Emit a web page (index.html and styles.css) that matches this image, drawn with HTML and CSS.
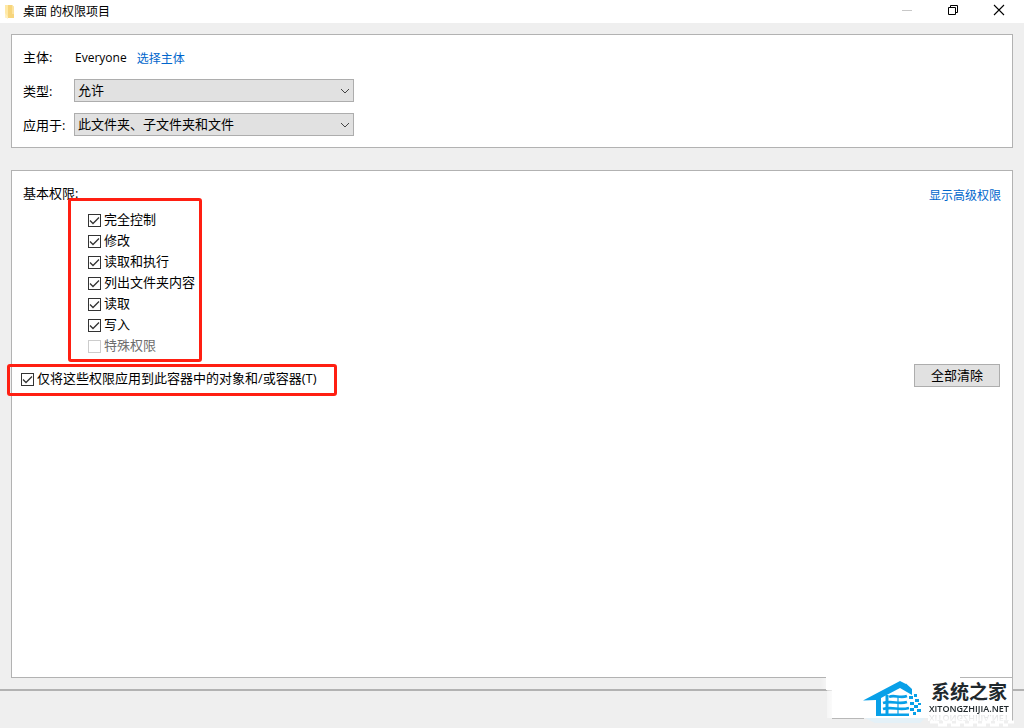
FILE: index.html
```html
<!DOCTYPE html>
<html lang="zh-CN">
<head>
<meta charset="utf-8">
<title>桌面 的权限项目</title>
<link rel="stylesheet" href="styles.css">
</head>
<body>
<header class="titlebar">
  <svg class="folder" width="10" height="16" viewBox="0 0 10 16" aria-hidden="true"><path d="M0 1h7l2 2v11H2L0 13z" fill="#f7d57c"/><path d="M0 1h3v13L0 13z" fill="#ffe9a6"/><path d="M3 13v2l-3-2V9z" fill="#fff0c0"/><path d="M7 1l2 2v7H7z" fill="#fbe3a0"/></svg>
  <h1 class="title">桌面 的权限项目</h1>
  <div class="window-buttons">
    <button class="window-button" type="button" aria-label="最小化" disabled><svg width="12" height="12" viewBox="0 0 12 12"><path d="M1 6.5h10" stroke="#c8c8c8"/></svg></button>
    <button class="window-button" type="button" aria-label="还原"><svg width="12" height="12" viewBox="0 0 12 12"><path d="M1.5 3.5h7v7h-7zM3.5 3.5v-2h7v7h-2" fill="none" stroke="#000"/></svg></button>
    <button class="window-button" type="button" aria-label="关闭"><svg width="12" height="12" viewBox="0 0 12 12"><path d="M1 1l10 10M11 1L1 11" stroke="#000" stroke-width="1.1"/></svg></button>
  </div>
</header>
<main class="content">
  <section class="panel subject">
    <div class="row">
      <span class="label">主体:</span>
      <span class="principal">Everyone</span>
      <a class="link" href="#principal">选择主体</a>
    </div>
    <div class="row">
      <label class="label" for="type">类型:</label>
      <div class="combo">
        <select class="select" id="type"><option>允许</option></select>
        <svg class="chevron" width="10" height="6" viewBox="0 0 10 6"><path d="M1 1l4 4 4-4" fill="none" stroke="#444"/></svg>
      </div>
    </div>
    <div class="row">
      <label class="label" for="scope">应用于:</label>
      <div class="combo">
        <select class="select" id="scope"><option>此文件夹、子文件夹和文件</option></select>
        <svg class="chevron" width="10" height="6" viewBox="0 0 10 6"><path d="M1 1l4 4 4-4" fill="none" stroke="#444"/></svg>
      </div>
    </div>
  </section>
  <section class="panel permissions">
    <div class="heading">
      <h2 class="heading-text">基本权限:</h2>
      <a class="link" href="#advanced">显示高级权限</a>
    </div>
    <ul class="list">
      <li><label class="check"><input class="box" type="checkbox" checked>完全控制</label></li>
      <li><label class="check"><input class="box" type="checkbox" checked>修改</label></li>
      <li><label class="check"><input class="box" type="checkbox" checked>读取和执行</label></li>
      <li><label class="check"><input class="box" type="checkbox" checked>列出文件夹内容</label></li>
      <li><label class="check"><input class="box" type="checkbox" checked>读取</label></li>
      <li><label class="check"><input class="box" type="checkbox" checked>写入</label></li>
      <li><label class="check check-disabled"><input class="box" type="checkbox" disabled>特殊权限</label></li>
    </ul>
    <div class="actions">
      <label class="check check-inherit"><input class="box" type="checkbox" checked>仅将这些权限应用到此容器中的对象和/或容器(T)</label>
      <button class="clear" type="button">全部清除</button>
    </div>
  </section>
</main>
<footer class="footer"></footer>
<div class="watermark">
  <svg class="haze" width="204" height="52" viewBox="0 0 204 52" aria-hidden="true">
    <defs><linearGradient id="fade"><stop offset="0" stop-color="#fff" stop-opacity="0"/><stop offset="1" stop-color="#fff"/></linearGradient></defs>
    <path d="M6 1H140V2H192V45H108V42H12V14H6z" fill="#fff"/>
    <path d="M0 2h10v11H0zM7 14h10v28H7z" fill="url(#fade)"/>
    <path d="M12 42.500h32" stroke="#b8b8b8"/>
    <path d="M140 1.500h52.500V45" fill="none" stroke="#b5b5b5"/>
    <path d="M45 42h60l-5 5H55z" fill="#e4f1f8"/>
    <path d="M110 46h84M118 49h70" stroke="#fff" stroke-width="3" stroke-dasharray="9 4"/>
  </svg>
  <svg class="logo" width="60" height="38" viewBox="0 0 60 38" aria-hidden="true">
    <path fill="#08a0e8" d="M0 20.500L37 1 43 4V3.500L49 9v6L37 8 18 18v18h-5V20z"/>
    <path fill="#08a0e8" d="M13 18h5v18h-5z"/>
    <path fill="none" stroke="#08a0e8" stroke-width="2.600" d="M26 17c5-3 11 2 18-1M20 23c10-3 15 2 24-1M20 29c10-3 15 2 26-1M13 34.700h33"/>
    <path fill="none" stroke="#08a0e8" stroke-width="3" d="M24 15v20"/>
    <path fill="none" stroke="#08a0e8" stroke-width="1.200" d="M35 16v19"/>
    <path fill="#08a0e8" d="M46 16h4v3h-4zM51 14h3v3h-3zM52 19h4v3h-4zM47 22h4v3h-4zM55 23h3v2h-3zM51 25h4v3h-4zM47 28h4v3h-4zM54 29h4v3h-4zM50 32h3v3h-3z"/>
  </svg>
  <div class="brand">
    <span class="brand-name">系统之家</span>
    <span class="brand-url">XITONGZHIJIA.NET</span>
  </div>
</div>
</body>
</html>
```
FILE: styles.css
```css
* { box-sizing: border-box; }
body {
  margin: 0;
  min-height: 100vh;
  display: flex;
  flex-direction: column;
  position: relative;
  overflow: hidden;
  background: #efefef;
  color: #000;
  font: 13px/20px "Open Sans", "Noto Sans CJK SC", sans-serif;
}
.titlebar {
  display: flex;
  align-items: center;
  height: 23px;
  padding-left: 5px;
  background: #fff;
}
.folder { margin-right: 8px; }
.title { margin: 0; font-size: 12px; font-weight: 400; }
.window-buttons {
  display: flex;
  align-self: flex-start;
  margin-left: auto;
  padding-right: 2px;
}
.window-button {
  display: flex;
  align-items: center;
  justify-content: center;
  width: 46px;
  height: 20px;
  padding: 0;
  border: 0;
  background: none;
}
.content {
  flex: 1;
  display: flex;
  flex-direction: column;
  gap: 22px;
  padding: 11px;
}
.panel {
  border: 1px solid #b2b2b2;
  background: #fff;
}
.subject {
  display: flex;
  flex-direction: column;
  gap: 11px;
  padding: 11px;
}
.row { display: flex; align-items: center; }
.label { width: 51px; }
.principal { margin: 2px 10px 0 1px; font-size: 12px; }
.link {
  padding-top: 3px;
  color: #0066cc;
  font-size: 12px;
  line-height: 19px;
  text-decoration: none;
}
.combo { position: relative; width: 280px; }
.select {
  display: block;
  appearance: none;
  width: 100%;
  height: 23px;
  padding: 0 24px 1px 3px;
  border: 1px solid #adadad;
  border-radius: 0;
  background: #e1e1e1;
  color: #000;
  font: inherit;
}
.chevron { position: absolute; right: 4px; top: 9px; pointer-events: none; }
.permissions { flex: 1; padding: 12px 11px; }
.heading { display: flex; justify-content: space-between; }
.heading-text { margin: 0; font-size: 13px; font-weight: 400; }
.list {
  position: relative;
  width: max-content;
  margin: 4px 0 8px 65px;
  padding: 0;
  list-style: none;
}
.check {
  display: flex;
  align-items: center;
  gap: 3px;
  line-height: 21px;
}
.box {
  appearance: none;
  width: 13px;
  height: 13px;
  margin: 1px 0 0;
  border: 1px solid #333;
  background: #fff;
}
.box:checked {
  background: #fff url("data:image/svg+xml,%3Csvg xmlns='http://www.w3.org/2000/svg' viewBox='0 0 11 11'%3E%3Cpath d='M1 5.500l3 3L10 2.500' fill='none' stroke='%23333' stroke-width='1.300'/%3E%3C/svg%3E") center / 11px 11px no-repeat;
}
.box:disabled { border-color: #ccc; }
.check-disabled { color: #6d6d6d; }
.list::after, .check-inherit::after {
  content: "";
  position: absolute;
  border: 3px solid #ff1f12;
  border-radius: 3px;
  pointer-events: none;
}
.list::after { inset: -11px -7px -6px -20px; }
.actions { display: flex; align-items: flex-start; justify-content: space-between; }
.check-inherit { position: relative; margin: 4px 0 0 -2px; }
.check-inherit::after { inset: -4px -20px -7px -14px; }
.clear {
  width: 86px;
  height: 23px;
  margin-right: 1px;
  padding: 0 0 2px;
  border: 1px solid #adadad;
  background: #e1e1e1;
  color: #000;
  font: inherit;
}
.footer { height: 39px; border-top: 2px solid #b2b2b2; }
.watermark {
  position: absolute;
  right: 0;
  bottom: 0;
  display: flex;
  width: 204px;
  height: 52px;
  padding: 4px 0 0 43px;
}
.haze { position: absolute; left: 0; top: 0; }
.logo { position: relative; }
.brand {
  position: relative;
  display: flex;
  flex-direction: column;
  margin-left: 6px;
  color: #20282c;
}
.brand-name { padding-left: 2px; font: 700 19px/22px "Noto Sans CJK SC", sans-serif; }
.brand-url {
  font: 600 9px/14px "Open Sans", sans-serif;
  -webkit-box-reflect: below -5px linear-gradient(transparent, rgba(0, 0, 0, 0.2));
}
```
